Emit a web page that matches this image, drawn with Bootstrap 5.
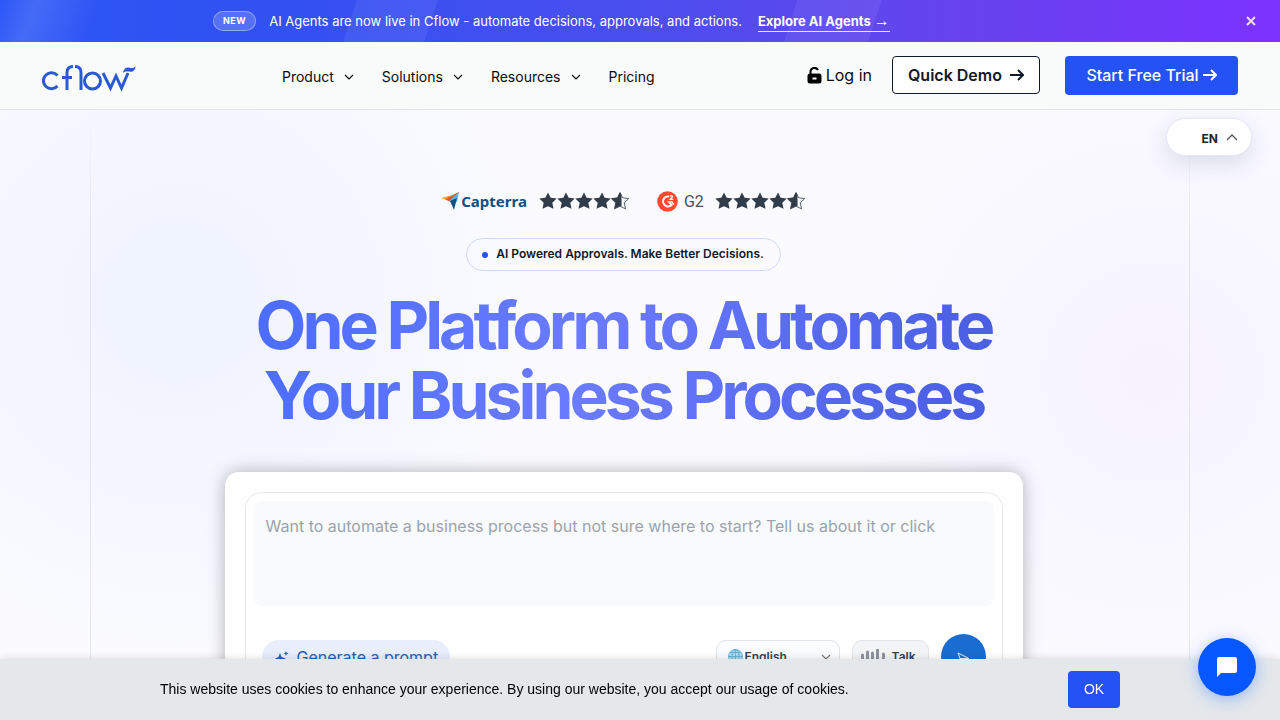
<!DOCTYPE html>
<html lang="en">
<head>
<meta charset="utf-8">
<meta name="viewport" content="width=device-width, initial-scale=1">
<title>Cflow</title>
<link href="https://cdn.jsdelivr.net/npm/bootstrap@5.3.0/dist/css/bootstrap.min.css" rel="stylesheet">
<style>
body{font-family:Inter,"Liberation Sans",sans-serif;color:#111827;
  background:radial-gradient(circle at 14% 42%,#eff3ff 0,#eff3ff00 380px),radial-gradient(circle at 90% 52%,#f6f3ff 0,#f6f3ff00 360px),#fbfbff}
a{text-decoration:none;color:inherit}
.announce{height:42px;font-size:13px;color:#fff;
  background:linear-gradient(110deg,#fff0 0,#ffffff1f 35px,#fff0 95px),
  linear-gradient(108deg,#fff0 339px,#ffffff10 340px,#ffffff10 416px,#fff0 417px,#fff0 758px,#ffffff10 759px,#ffffff10 838px,#fff0 839px),
  linear-gradient(90deg,#2b57f6 0,#3151f2 20%,#4b4eee 50%,#6744ee 75%,#7c32ff 100%)}
.announce .side{width:213px}
.tag{font-size:9px;line-height:18px;font-weight:700;letter-spacing:.5px;border:1px solid #ffffff59;background:#ffffff2e;padding:0 9px;margin-right:13px}
.news{padding-top:2px}
.explore{font-weight:700;line-height:20px;border-bottom:1px solid #ffffffd9;margin-left:16px}
.far{font:16px "Liberation Sans",sans-serif;line-height:16px}
.shut{position:absolute;right:16px;top:8px;color:#efdcff}
.topbar{height:68px;background:#f9fafa;border-bottom:1px solid #e2e5ee;padding:0 42px 1px}
.logo{width:94px;margin-right:146px;padding-top:6px}
.menu{font-size:14px;color:#0b0b0f;padding-top:3px}
.menu a{margin-right:28px}
.menu svg{margin:0 0 3px 10px}
.login{font-size:16px;color:#0b0b0f;margin-right:20px}
.demo,.trial{font-size:16px;font-weight:600;border-radius:4px;padding:0}
.demo{width:148px;height:38px;border:1px solid #111827;background:#fff;color:#111827;margin-right:25px}
.trial{width:173px;height:39px;background:#2552f5;color:#fff;font-weight:500}
.demo:hover,.trial:hover{opacity:.9}
.lang{position:absolute;right:28px;top:118px;width:86px;height:38px;background:#fff;border:1px solid #e6e6fb;font-size:12px;font-weight:700;box-shadow:0 8px 22px #31417a26;padding:4px 13px 0 0}
.lang svg{margin-bottom:4px}
.frame{width:100%;max-width:1100px;padding-right:33px;border:1px solid;border-width:0 1px;border-image:linear-gradient(#dfe3f000,#e3e6f0 120px) 1}
.ratings{margin-top:80px;height:22px}
.cap{font:bold 15px "Noto Sans","Open Sans",sans-serif;color:#15507d;margin:0 12px 0 1px}
.g2{font:16px Roboto,sans-serif;color:#45505a;margin:0 11px 0 6px}
.gtwo{margin-left:27px}
.pill{border:1px solid #cfd8fa;font-size:12px;font-weight:600;height:33px;padding:0 16px 2px 15px;margin-top:26px}
.dot{width:6px;height:6px;background:#2552f5;margin-top:2px}
.headline{font-size:66px;line-height:70px;font-weight:700;letter-spacing:-4px;margin:19px 0 0;padding:0 8px;
  background:linear-gradient(100deg,#4a6cff 0,#6b7bff 45%,#4a5fe3 95%);-webkit-background-clip:text;background-clip:text;color:transparent}
.prompt{width:798px;background:#fff;border-radius:14px;padding:20px;margin-top:42px;box-shadow:0 0 18px #0000004a}
.inner{border:1px solid #e5e7eb;border-radius:16px;padding:8px}
.ask{height:105px;border:0;border-radius:8px;background:#f8fafc;font-size:16px;padding:13px 12px;resize:none;color:#111827}
.ask::placeholder{color:#9ca3af}
.tools{margin-top:28px;padding:0 8px}
.gen{height:34px;border:0;background:#e8eefc;color:#2160b8;font-size:16px;padding:0 12px}
.pick{position:relative;margin-right:12px}
.pick select{width:124px;height:34px;border:1px solid #e0e3e8;border-radius:10px;background:#fbfcfd;font-size:12px;font-weight:600;color:#374151;padding:0 28px;appearance:none}
.pick .globe{position:absolute;left:12px;top:9px}
.pick .chev{position:absolute;right:9px;top:14px}
.talk{width:77px;height:34px;border:1px solid #e0e3e8;border-radius:10px;background:#f3f4f6;font-size:12px;font-weight:600;color:#374151;margin-right:12px;padding:0 12px 0 8px}
.send{width:45px;height:45px;border:0;background:#1a6dd0}
.cookies{height:61px;background:#e4e8eb;font:14px "Liberation Sans",Arial,sans-serif;color:#000;padding:0 160px;box-shadow:0 0 8px #00000026}
.cookies span{padding-bottom:2px}
.okay{width:52px;height:37px;background:#2552f5;color:#fff;border-radius:4px;font-size:14px;padding:0}
.chat{position:fixed;right:24px;bottom:24px;width:58px;height:58px;background:#0657ff;border:0;z-index:1040;box-shadow:0 3px 16px #0657ff59}
</style>
</head>
<body class="vh-100 d-flex flex-column overflow-hidden">
<svg class="d-none"><defs>
<path id="star" d="M9 .5l2.700 5.300 6 .8-4.400 4.200 1.200 6L9 14.200l-5.500 2.600 1.200-6L.3 6.600l6-.8z"/>
<symbol id="stars" viewBox="0 0 91 18"><g fill="#303c49"><use href="#star"/><use href="#star" x="18"/><use href="#star" x="36"/><use href="#star" x="54"/><path d="M82.500 3v11l-1.500.2-5.500 2.600 1.200-6-4.400-4.200 6-.8L81 .5z"/></g><use href="#star" x="72" fill="none" stroke="#303c49" stroke-width=".8"/></symbol>
<symbol id="down" viewBox="0 0 10 6"><path d="M1 1l4 4 4-4" fill="none" stroke="currentColor" stroke-width="1.100"/></symbol>
<symbol id="arrow" viewBox="0 0 14 12"><path d="M0 6h13M8 1l5 5-5 5" fill="none" stroke="currentColor" stroke-width="2"/></symbol>
</defs></svg>

<div class="announce d-flex flex-shrink-0 align-items-center position-relative">
  <div class="side"></div>
  <span class="tag rounded-pill">NEW</span>
  <span class="news">AI Agents are now live in Cflow - automate decisions, approvals, and actions.</span>
  <a class="explore" href="#">Explore AI Agents <span class="far">→</span></a>
  <button class="shut btn border-0 p-2 lh-1" aria-label="Close"><svg class="d-block" width="10" height="10" viewBox="0 0 10 10"><path d="M1 1l8 8M9 1L1 9" stroke="currentColor" stroke-width="2"/></svg></button>
</div>

<header class="topbar d-flex flex-shrink-0 align-items-center">
  <a class="logo" href="#" aria-label="Cflow"><svg class="d-block" width="94" height="27" viewBox="0 0 94 27"><g fill="none" stroke="#2b59d5" stroke-width="3"><path d="M15.500 10.500A8 8 0 1 0 15.500 21"/><path d="M25 25V7.500c0-4 2-6 6-6M20 12.500h10M33 1.500c4 0 6 2 6 6V25"/><circle cx="50.500" cy="16" r="8"/><path d="M61 8l7.500 15L74 11l5.500 12L86 8"/></g><path d="M81 8c1-6 5-6 8-5 2 .4 3-.3 4.500-2-.2 4-2 6-5 5.800-3-.2-5-1-7.500 1.200z" fill="#2b59d5"/></svg></a>
  <nav class="menu d-flex align-items-center flex-grow-1">
    <a href="#">Product<svg width="10" height="6"><use href="#down"/></svg></a>
    <a href="#">Solutions<svg width="10" height="6"><use href="#down"/></svg></a>
    <a href="#">Resources<svg width="10" height="6"><use href="#down"/></svg></a>
    <a href="#">Pricing</a>
  </nav>
  <a class="login d-flex align-items-center gap-1" href="#"><svg width="15" height="17" viewBox="0 0 15 17"><path d="M3.500 8V5a4 4 0 0 1 7.500-2" fill="none" stroke="#000" stroke-width="2"/><path fill-rule="evenodd" d="M3 6.500h9a2.500 2.500 0 0 1 2.500 2.500v5a2.500 2.500 0 0 1-2.500 2.500H3A2.500 2.500 0 0 1 .5 14V9A2.500 2.500 0 0 1 3 6.500zM5.500 10.500v2h4v-2z"/></svg>Log in</a>
  <button class="demo btn d-flex align-items-center justify-content-center gap-2">Quick Demo <svg width="14" height="12"><use href="#arrow"/></svg></button>
  <button class="trial btn d-flex align-items-center justify-content-center gap-1">Start Free Trial <svg width="14" height="12"><use href="#arrow"/></svg></button>
</header>

<button class="lang btn rounded-pill d-flex align-items-center justify-content-end gap-2">EN <svg width="12" height="7" viewBox="0 0 12 7"><path d="M1 6l5-5 5 5" fill="none" stroke="#555" stroke-width="1.300"/></svg></button>

<main class="frame mx-auto d-flex flex-column flex-grow-1 align-items-center overflow-hidden">
  <div class="ratings d-flex flex-shrink-0 align-items-center">
    <svg width="19" height="18" viewBox="0 0 19 18"><path d="M0 6L12 3 18 0l-8 9z" fill="#ff9d28"/><path d="M4 7.500L12 3l6-3-8 10z" fill="#e9532d"/><path d="M8 9L18 0l-2 10-3-1z" fill="#52b7e9"/><path d="M9 9l7-3-3 12z" fill="#15507d"/></svg>
    <span class="cap">Capterra</span>
    <svg width="91" height="18"><use href="#stars"/></svg>
    <svg class="gtwo" width="21" height="21" viewBox="0 0 21 21"><circle cx="10.500" cy="10.500" r="10.300" fill="#ff492c"/><path d="M12 5.500a5 5 0 1 0 2.500 8.500l-2-2.500" fill="none" stroke="#fff" stroke-width="2"/><path d="M10.500 10.800h4.500l1.800 3M13 5.500c1-1.500 3-.5 2.300.7L13.200 8.300h3" fill="none" stroke="#fff" stroke-width="1.300"/></svg>
    <span class="g2">G2</span>
    <svg width="91" height="18"><use href="#stars"/></svg>
  </div>
  <div class="pill rounded-pill d-flex flex-shrink-0 align-items-center gap-2"><span class="dot rounded-circle"></span>AI Powered Approvals. Make Better Decisions.</div>
  <h1 class="headline flex-shrink-0 text-center">One Platform to Automate<br>Your Business Processes</h1>
  <section class="prompt flex-shrink-0">
    <div class="inner">
      <textarea class="ask d-block w-100" aria-label="Describe your process" placeholder="Want to automate a business process but not sure where to start? Tell us about it or click"></textarea>
      <div class="tools d-flex align-items-center">
        <button class="gen rounded-pill d-flex align-items-center gap-2 me-auto"><svg width="15" height="15" viewBox="0 0 15 15" fill="currentColor"><path d="M6 4l1.500 4L12 9.500 7.500 11 6 15l-1.500-4L1 9.500 4.500 8zM12 2l.7 1.800 1.800.7-1.800.7L12 7l-.7-1.800-1.800-.7 1.800-.7z"/></svg>Generate a prompt</button>
        <div class="pick"><svg class="globe" width="15" height="15" viewBox="0 0 15 15"><circle cx="7.500" cy="7.500" r="7" fill="#a9dcf2"/><g fill="none" stroke="#5aa9ca" stroke-width=".8"><circle cx="7.500" cy="7.500" r="7"/><ellipse cx="7.500" cy="7.500" rx="3.500" ry="7"/><path d="M7.500 0v15M0 7.500h15M2 3.500h11M2 11.500h11"/></g></svg>
          <select aria-label="Language"><option>English</option></select><svg class="chev" width="10" height="6" color="#777"><use href="#down"/></svg></div>
        <button class="talk d-flex align-items-center justify-content-between"><svg width="24" height="16" viewBox="0 0 24 16"><path d="M1.500 6v5M6.500 3v10M11.500 4v8M16.500 1v14M22.500 5v7" stroke="#8d939c" stroke-width="3" stroke-linecap="round"/></svg>Talk</button>
        <button class="send rounded-circle p-0" aria-label="Send"><svg width="13" height="13" viewBox="0 0 13 13"><path d="M1 1l11 5.500L1 12l2-5.500zM3 6.500h9" fill="none" stroke="#fff" stroke-width=".9"/></svg></button>
      </div>
    </div>
  </section>
</main>

<div class="cookies fixed-bottom d-flex align-items-center justify-content-between">
  <span>This website uses cookies to enhance your experience. By using our website, you accept our usage of cookies.</span>
  <button class="okay btn">OK</button>
</div>
<button class="chat rounded-circle d-flex align-items-center justify-content-center" aria-label="Open chat"><svg width="20" height="20" viewBox="0 0 20 20"><path d="M2 0h16a2 2 0 0 1 2 2v12a2 2 0 0 1-2 2H4l-4 4V2a2 2 0 0 1 2-2z" fill="#fff"/></svg></button>
<script src="https://cdn.jsdelivr.net/npm/bootstrap@5.3.0/dist/js/bootstrap.bundle.min.js"></script>
</body>
</html>
